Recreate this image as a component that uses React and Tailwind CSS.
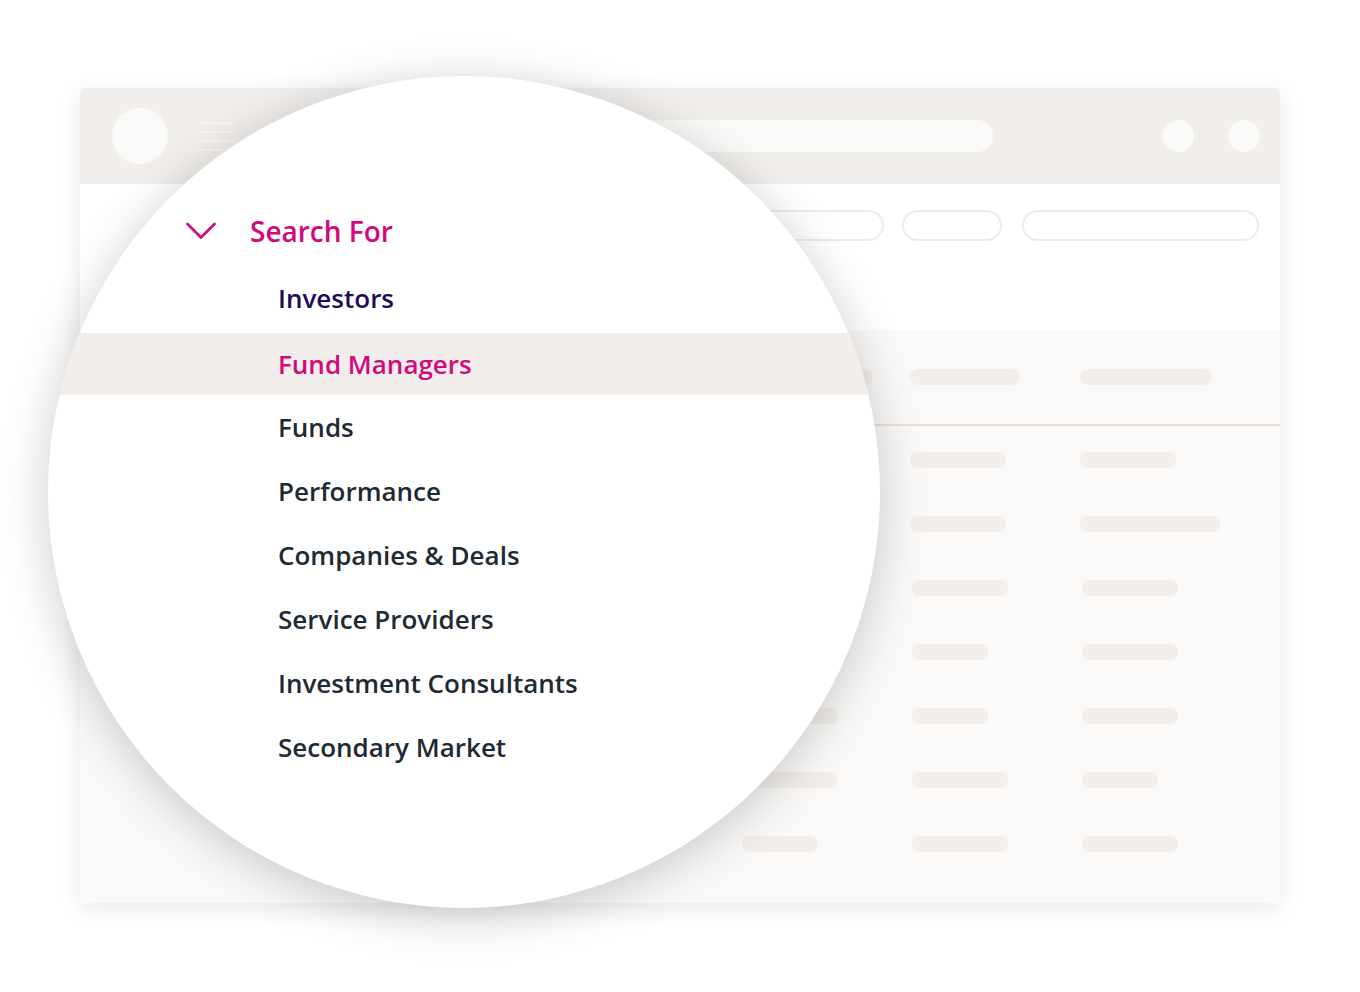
import React from 'react'

// table placeholder bars, widths per column (a is hidden under the lens in the first rows)
const rows = [
  { a: 96, b: 96, c: 96, x: 0 },
  { a: 96, b: 96, c: 140, x: 0 },
  { a: 96, b: 96, c: 96, x: 2 },
  { a: 96, b: 76, c: 96, x: 2 },
  { a: 96, b: 76, c: 96, x: 2 },
  { a: 96, b: 96, c: 76, x: 2 },
  { a: 76, b: 96, c: 96, x: 2 },
]

const menu = [
  'Funds',
  'Performance',
  'Companies & Deals',
  'Service Providers',
  'Investment Consultants',
  'Secondary Market',
]

function Bar({ w }) {
  return <div className="h-4 rounded-full bg-[#f1eeeb]" style={{ width: w }} />
}

function Window() {
  return (
    <div className="w-[1200px] h-[815px] rounded-md overflow-hidden bg-[#faf9f8] shadow-[0_6px_24px_rgba(0,0,0,0.09)]">
      {/* title bar */}
      <div className="h-[96px] bg-[#f1eeeb] flex items-center">
        <div className="ml-[32px] w-[56px] h-[56px] rounded-full bg-[#fafaf9]" />
        <div className="ml-[30px] w-[36px] flex flex-col gap-[7px]">
          <div className="h-[2px] bg-[#f8f6f5]" />
          <div className="h-[2px] bg-[#f8f6f5]" />
          <div className="h-[2px] bg-[#f8f6f5]" />
          <div className="h-[2px] bg-[#f8f6f5]" />
        </div>
        <div className="ml-[46px] w-[713px] h-[32px] rounded-full bg-[#fafaf9]" />
        <div className="ml-auto mr-[20px] flex gap-[34px]">
          <div className="w-[32px] h-[32px] rounded-full bg-[#fafaf9]" />
          <div className="w-[32px] h-[32px] rounded-full bg-[#fafaf9]" />
        </div>
      </div>
      {/* toolbar */}
      <div className="h-[146px] bg-white flex justify-end items-start pt-[26px] pr-[21px]">
        <div className="w-[184px] h-[31px] rounded-full border-2 border-[#efebe8]" />
        <div className="ml-[18px] w-[100px] h-[31px] rounded-full border-2 border-[#efebe8]" />
        <div className="ml-[20px] w-[237px] h-[31px] rounded-full border-2 border-[#efebe8]" />
      </div>
      {/* table header */}
      <div className="h-[96px] border-b-2 border-[#e6e1dd] flex items-center pl-[662px]">
        <div className="w-[168px]"><Bar w={130} /></div>
        <div className="w-[170px]"><Bar w={110} /></div>
        <div><Bar w={132} /></div>
      </div>
      {/* table body */}
      <div className="pt-[2px]">
        {rows.map((r, i) => (
          <div key={i} className="h-16 flex items-center pl-[662px]">
            <div className="w-[168px]"><Bar w={r.a} /></div>
            <div className="w-[170px]" style={{ paddingLeft: r.x }}><Bar w={r.b} /></div>
            <div style={{ paddingLeft: r.x }}><Bar w={r.c} /></div>
          </div>
        ))}
      </div>
    </div>
  )
}

function Lens() {
  return (
    <div
      className="absolute left-[48px] top-[76px] w-[832px] h-[832px] rounded-full bg-white overflow-hidden shadow-[0_8px_50px_rgba(0,0,0,0.2)]"
      style={{ fontFamily: '"Open Sans", "Noto Sans", sans-serif' }}
    >
      <div className="pt-[123px] flex flex-col">
        <div className="h-[64px] flex items-center">
          <svg className="ml-[138px]" width="30" height="18" viewBox="0 0 30 18" fill="none">
            <path d="M1.5 2 L15 15.5 L28.5 2" stroke="#d3087c" strokeWidth="2.6" strokeLinecap="round" strokeLinejoin="round" />
          </svg>
          <span className="ml-[34px] text-[28px] font-semibold text-[#d3087c] leading-none">Search For</span>
        </div>
        <div className="h-[70px] flex items-center pl-[230px] text-[26px] font-semibold text-[#1e0b5b]">
          Investors
        </div>
        <div className="h-[62px] flex items-center pl-[230px] text-[26px] font-semibold text-[#d3087c] bg-[#f1eeeb]">
          Fund Managers
        </div>
        {menu.map((m) => (
          <div key={m} className="h-16 flex items-center pl-[230px] text-[26px] font-semibold text-[#1d2a33]">
            {m}
          </div>
        ))}
      </div>
    </div>
  )
}

export default function App() {
  return (
    <div className="relative w-[1360px] h-[992px] bg-white overflow-hidden">
      <div className="pt-[88px] pl-[80px]">
        <Window />
      </div>
      <Lens />
    </div>
  )
}
